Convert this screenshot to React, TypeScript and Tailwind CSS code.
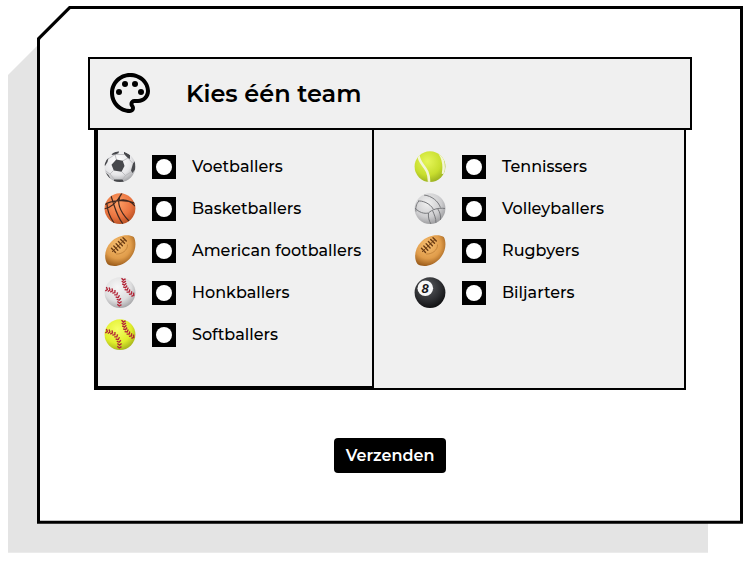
import React from 'react';

type BallKind = 'soccer' | 'basket' | 'rugby' | 'base' | 'soft' | 'tennis' | 'volley' | 'eight';

const font = 'font-["Montserrat","Inter","Liberation_Sans",sans-serif]';

function Stitches({ points }: { points: [number, number, number][] }) {
  return (
    <g stroke="#b32437" strokeWidth="1.35" fill="none">
      {points.map(([x, y, a], i) => (
        <path key={i} transform={`translate(${x} ${y}) rotate(${a})`} d="M-2.1 -1L0 .6L2.1 -1" />
      ))}
    </g>
  );
}

const seams: [number, number, number][] = [
  [19.5, 2.5, 5], [19.8, 5, 0], [20.4, 7.6, -8], [21.4, 10.1, -18], [22.9, 12.4, -30], [24.8, 14.6, -40], [27, 16.5, -50], [29.3, 18, -60],
  [2.8, 12.3, -75], [5.4, 12.8, -72], [8, 13.6, -65], [10.4, 15.2, -50], [12.5, 17.4, -38], [14, 20, -25], [15, 22.7, -12], [15.5, 25.5, 0], [15.3, 28.4, 5],
];

const colors: Record<BallKind, [string, string, string]> = {
  soccer: ['#ffffff', '#e6e6e8', '#98999c'],
  basket: ['#ffa066', '#ea7440', '#b04a1e'],
  rugby: ['#f7bf72', '#e09c4a', '#935516'],
  base: ['#f7f7f7', '#dededf', '#98989b'],
  soft: ['#f6ff68', '#e0ee2c', '#98a618'],
  tennis: ['#e6f65a', '#c8de2e', '#93a81e'],
  volley: ['#f0f0f0', '#cdcdcf', '#909093'],
  eight: ['#5a5c60', '#2c2d30', '#09090a'],
};

function Ball({ kind, id }: { kind: BallKind; id: string }) {
  const [a, b, c] = colors[kind];
  return (
    <svg className="h-8 w-8 shrink-0" viewBox="0 0 32 32">
      <defs>
        <radialGradient id={`${id}g`} cx=".42" cy=".32" r=".72">
          <stop offset="0" stopColor={a} />
          <stop offset=".6" stopColor={b} />
          <stop offset="1" stopColor={c} />
        </radialGradient>
        <clipPath id={`${id}c`}>
          <circle cx="16" cy="15.6" r="15.4" />
        </clipPath>
      </defs>
      {kind === 'rugby' ? (
        <g>
          <path d="M3.500 29C-.8 23 1 13 7 7C13 .5 24-1.500 29.800 2C33 8 31.500 17.500 25.500 24C19 30.800 9 33 3.500 29Z" fill={`url(#${id}g)`} />
          <path d="M23.500 9.500C24 15 18 19.500 12 19" fill="none" stroke="#b87830" strokeWidth=".7" />
          <path d="M8 17L21 4.500" stroke="#7a4619" strokeWidth="1" />
          <g stroke="#6b3c14" strokeWidth="1.4" strokeLinecap="round">
            <path d="M7.500 13.300L11.500 17.500M9.800 11L13.800 15.200M12.100 8.700L16.100 12.900M14.400 6.500L18.400 10.700M16.700 4.400L20.500 8.300M19 2.800L22.300 6.100" />
          </g>
        </g>
      ) : (
        <g clipPath={`url(#${id}c)`}>
          <rect width="32" height="32" fill={`url(#${id}g)`} />
          {kind === 'soccer' && (
            <g>
              <path fill="none" stroke="#b4b4b8" strokeWidth=".8" d="M12.500 9L11 3.500M18.500 10L24 7M17.500 20.500L21.500 24.500M9.500 19.500L6 23M11 3.500L4 8M11 3.500L20 3.500M24 7L28.500 12M28 20.500L21.500 24.500L19 28M10 28L6 23L1.500 20" />
              <g fill="#47484c">
                <path d="M12.300 8.600L18.800 9.800L20.500 15L17.500 20.700L9.800 19.600L7.500 13.800Z" />
                <path d="M9 1.500L15 0L14.500 2.200L11 3.500L7.500 4ZM20 .500L26 4L26 8L23.500 6.800L20 3ZM31 10L31.500 18L28.500 22L27 19.500L29 12.500ZM10 28.500L18.500 28.500L20 31L10 31ZM0 14L2.500 9L4.500 7L3.500 11L1 15ZM1 21L4.500 24L6.500 28L2 25Z" />
              </g>
            </g>
          )}
          {kind === 'basket' && (
            <path fill="none" stroke="#40281f" strokeWidth="1.2" d="M0 12C8 7 22 6 32 10.500M18 0C11 8 16 19 25 28M15 7.500C20 6 26 7.500 31 13M7 3C11 14 12 22 19 31M0 16C6 15 12 11 18 0M3 11C3 18 6 24 10 30" />
          )}
          {(kind === 'base' || kind === 'soft') && <Stitches points={seams} />}
          {kind === 'tennis' && (
            <path fill="none" stroke="#f3f5d6" strokeWidth="2.6" d="M4.500 3C4 14 15.500 15 15 31M25.500 2C29.500 8 30.500 15 29 23" />
          )}
          {kind === 'volley' && (
            <path fill="none" stroke="#77787b" strokeWidth="1" d="M1 15C5 19.500 10 21 14.500 20C18 16.500 24 14.500 31 15.500M14.500 20C14 24 15 28 17 31M4 8C8 7.500 16 10 19.500 16.500M10 2C18 3 24 8 26.500 14.500M18.500 17.500C20 21 22 25 22 30M23.500 15.500C26 19 27 23 26.500 27M2 18.500C1.500 15 2 11 5 8" />
          )}
          {kind === 'eight' && (
            <g>
              <circle cx="11.300" cy="11.300" r="7.800" fill="#f8f8f8" />
              <text x="11.200" y="16" textAnchor="middle" fontFamily="Liberation Sans, sans-serif" fontWeight="700" fontSize="13" fontStyle="italic" fill="#171717">8</text>
            </g>
          )}
        </g>
      )}
    </svg>
  );
}

interface Team {
  name: string;
  kind: BallKind;
}

const left: Team[] = [
  { name: 'Voetballers', kind: 'soccer' },
  { name: 'Basketballers', kind: 'basket' },
  { name: 'American footballers', kind: 'rugby' },
  { name: 'Honkballers', kind: 'base' },
  { name: 'Softballers', kind: 'soft' },
];

const right: Team[] = [
  { name: 'Tennissers', kind: 'tennis' },
  { name: 'Volleyballers', kind: 'volley' },
  { name: 'Rugbyers', kind: 'rugby' },
  { name: 'Biljarters', kind: 'eight' },
];

function TeamRow({ team, id }: { team: Team; id: string }) {
  return (
    <label className="flex h-[42px] items-center">
      <Ball kind={team.kind} id={id} />
      <span className="ml-4 flex h-6 w-6 shrink-0 items-center justify-center bg-black">
        <span className="h-[16.6px] w-[16.6px] rounded-full bg-white" />
      </span>
      <span className="ml-4 whitespace-nowrap text-base font-medium">{team.name}</span>
    </label>
  );
}

export default function App() {
  return (
    <div className={`relative h-[561px] w-[750px] overflow-hidden bg-white pl-[37px] pt-[6px] text-black ${font}`}>
      <div className="absolute left-[8px] top-[43px] h-[510px] w-[700px] bg-[#e4e4e4] [clip-path:polygon(0_32px,32px_0,100%_0,100%_509.700px,0_509.700px)]" />
      <main className="relative h-[518px] w-[706px] bg-black p-[3px] [clip-path:polygon(0_32px,32px_0,100%_0,100%_517.800px,0_517.800px)]">
        <div className="flex h-[512px] flex-col items-center bg-white pt-12 [clip-path:polygon(0_30.500px,30.500px_0,100%_0,100%_511.800px,0_511.800px)]">
          <header className="flex h-[73px] w-[604px] items-center border-2 border-black bg-[#f0f0f0] pl-4">
            <svg className="mb-px h-12 w-12" viewBox="0 0 24 24">
              <path d="M12 22C6.490 22 2 17.510 2 12S6.490 2 12 2s10 4.040 10 9c0 3.310-2.690 6-6 6h-1.770c-.28 0-.5.220-.5.500 0 .120.050.230.130.330.410.470.640 1.060.640 1.670A2.500 2.500 0 0 1 12 22zm0-18c-4.410 0-8 3.590-8 8s3.590 8 8 8c.280 0 .5-.220.500-.5a.54.540 0 0 0-.14-.350c-.41-.46-.63-1.050-.63-1.650a2.500 2.500 0 0 1 2.500-2.500H16c2.210 0 4-1.790 4-4 0-3.860-3.590-7-8-7z" />
              <circle cx="6.5" cy="11.5" r="1.5" />
              <circle cx="9.5" cy="7.5" r="1.5" />
              <circle cx="14.5" cy="7.5" r="1.5" />
              <circle cx="17.5" cy="11.5" r="1.5" />
            </svg>
            <h1 className="ml-8 text-2xl font-semibold">Kies één team</h1>
          </header>
          <section className="flex h-[260px] w-[592px] border-2 border-t-0 border-black bg-[#f0f0f0]">
            <div className="w-[278px] border-2 border-t-0 border-black pl-[6px] pt-4">
              {left.map((t, i) => <TeamRow key={t.name} team={t} id={`l${i}`} />)}
            </div>
            <div className="pl-10 pt-4">
              {right.map((t, i) => <TeamRow key={t.name} team={t} id={`r${i}`} />)}
            </div>
          </section>
          <button className="mt-12 h-[35px] w-28 rounded bg-black text-base font-semibold text-white">Verzenden</button>
        </div>
      </main>
    </div>
  );
}
